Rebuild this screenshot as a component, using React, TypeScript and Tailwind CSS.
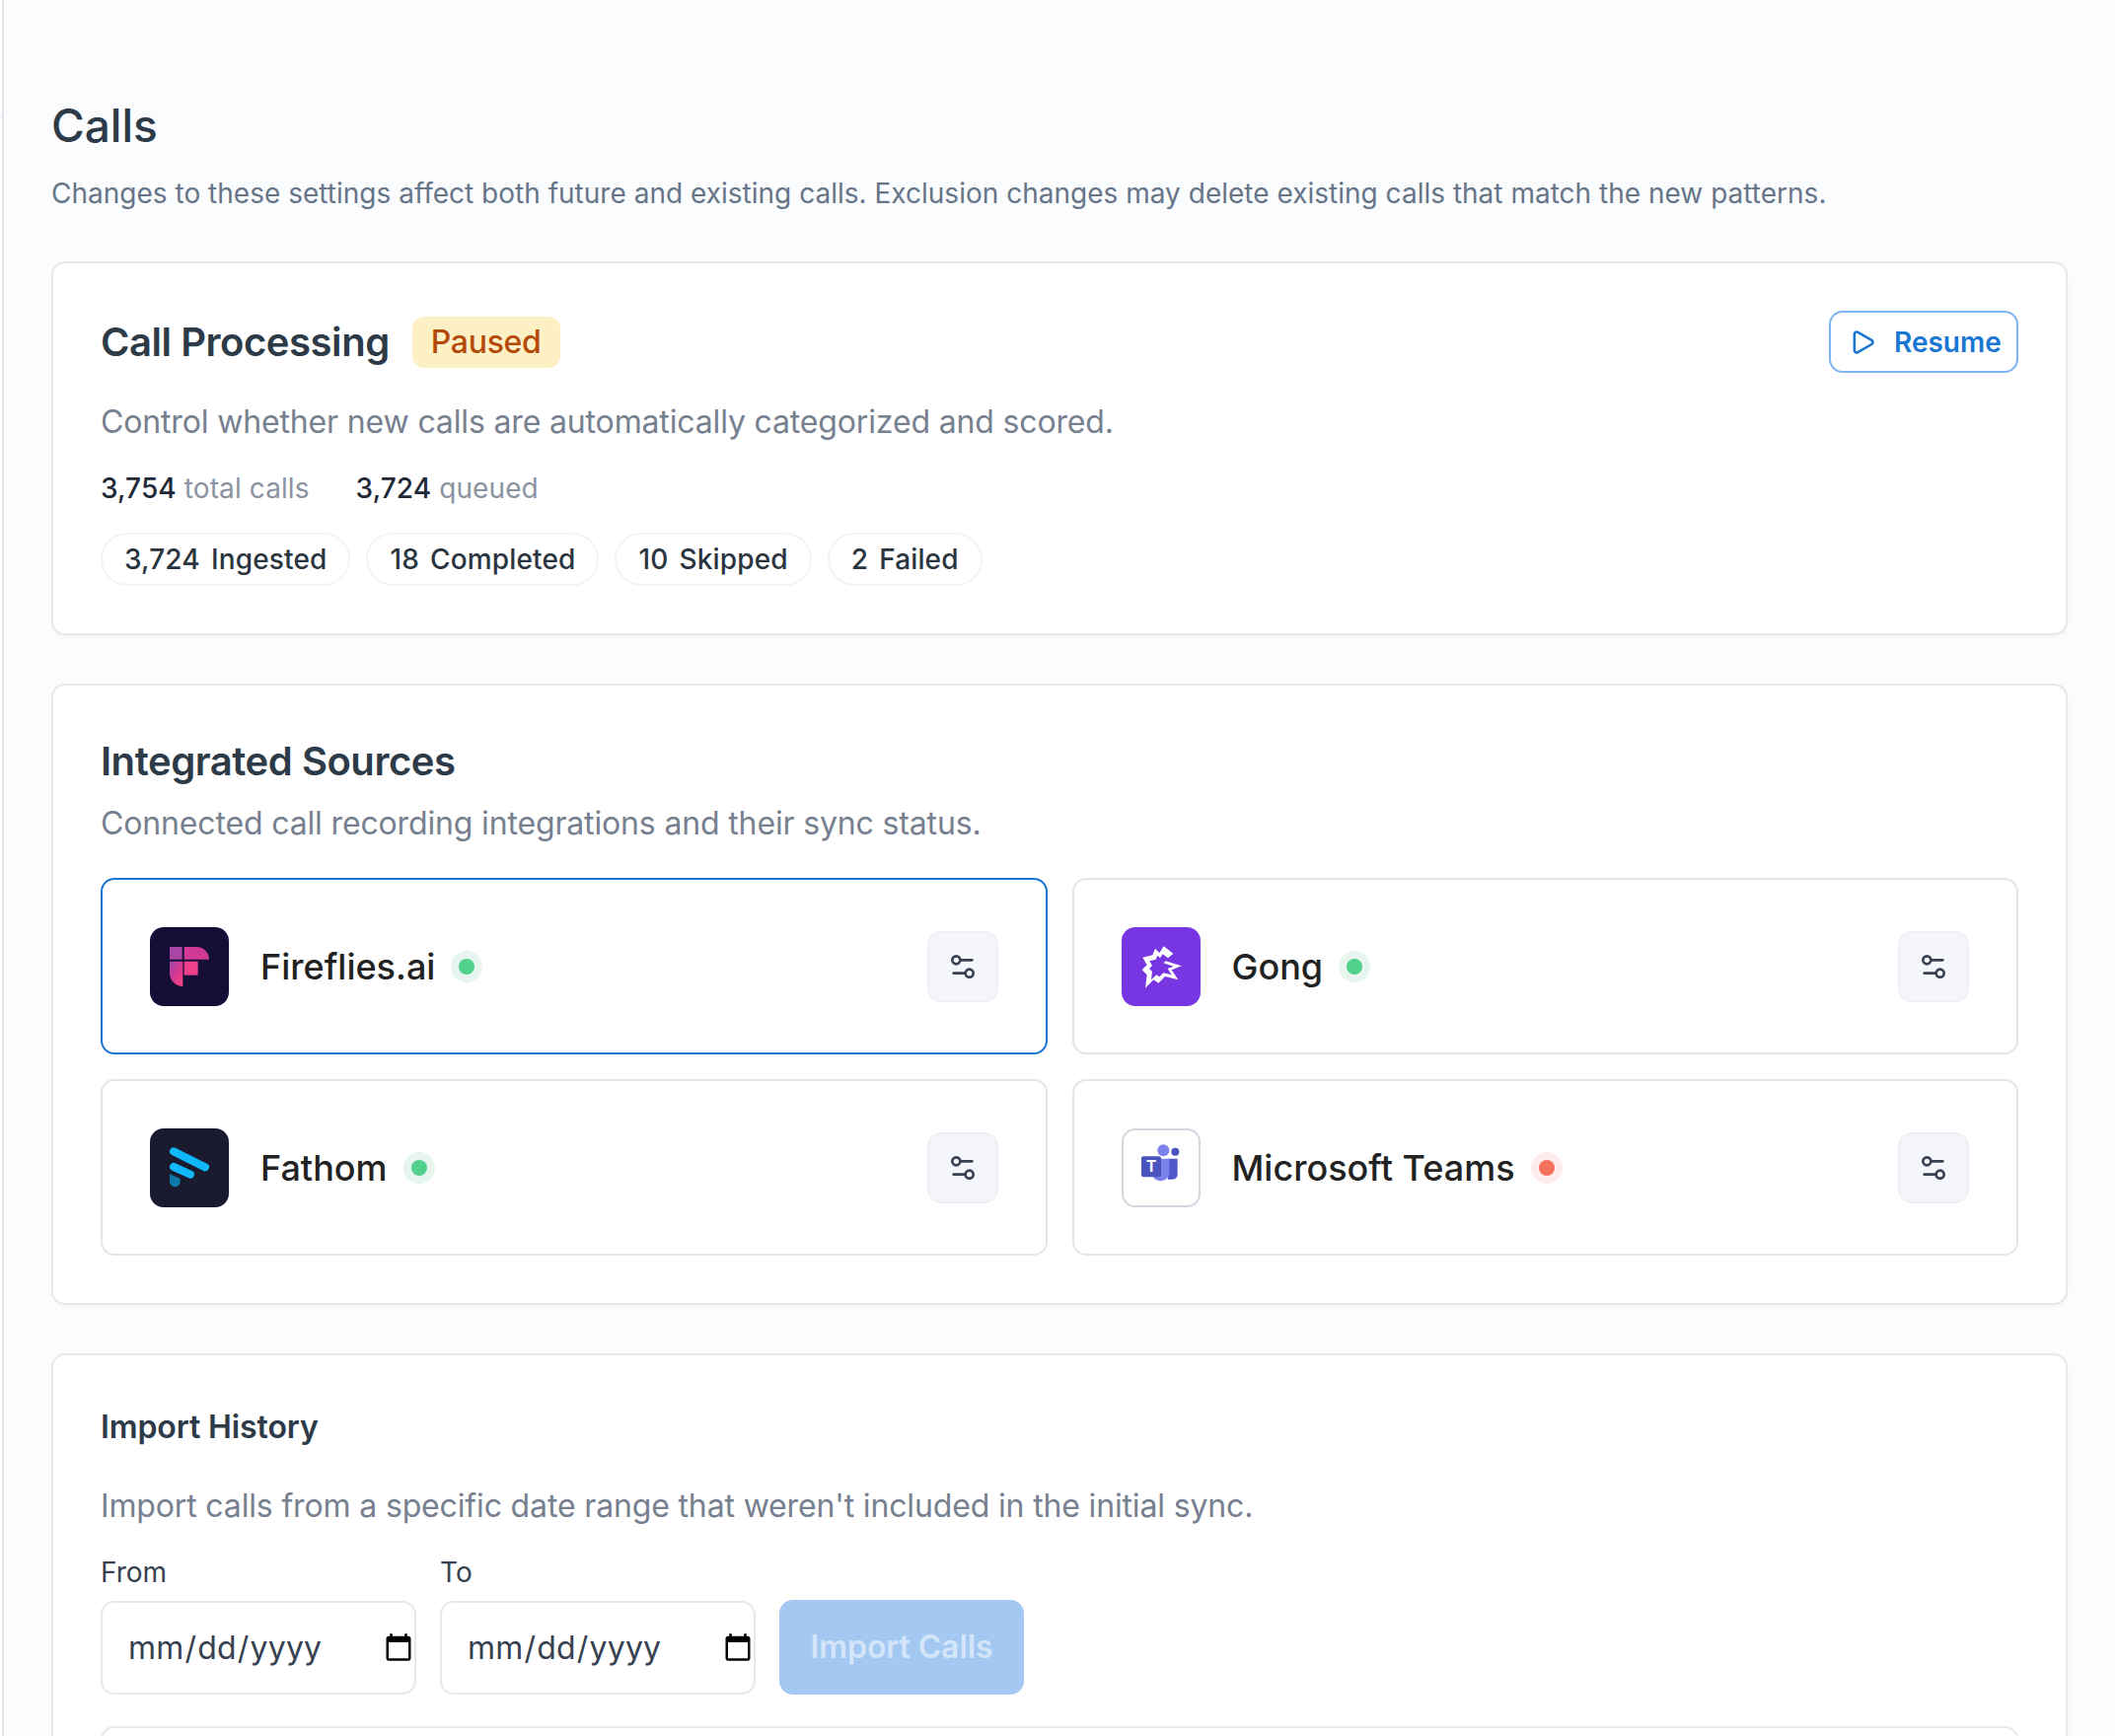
import React from "react";
import { Play, Settings2 } from "lucide-react";

const FirefliesLogo = () => (
  <svg viewBox="0 0 240 240" className="w-full h-full">
    <defs>
      <linearGradient id="ff" x1="0" y1="0" x2="1" y2="1">
        <stop offset="0" stopColor="#9a4ab0" />
        <stop offset="0.5" stopColor="#d6388f" />
        <stop offset="1" stopColor="#f8437f" />
      </linearGradient>
    </defs>
    <rect width="240" height="240" fill="#150f38" />
    <rect x="60" y="60" width="38" height="38" fill="#a947a6" />
    <path d="M104 60H142A38 38 0 0 1 180 98H104Z" fill="#d03a95" />
    <rect x="104" y="104" width="42" height="42" fill="#f0408a" />
    <path d="M60 104H100V180A40 40 0 0 1 60 140Z" fill="url(#ff)" />
  </svg>
);

const GongLogo = () => (
  <svg viewBox="0 0 240 240" className="w-full h-full">
    <rect width="240" height="240" fill="#7836e2" />
    <polygon
      points="128,58 157,80 132,102 182,118 152,130 172,160 132,150 112,170 97,160 72,185 77,145 62,130 77,115 64,92 94,85 102,65 115,78"
      fill="#ffffff"
    />
    <polygon
      points="125,82 143,95 127,109 158,119 140,126 152,145 127,139 115,151 106,145 90,160 93,135 84,126 93,117 85,103 104,98 109,86 117,94"
      fill="#7836e2"
    />
  </svg>
);

const FathomLogo = () => (
  <svg viewBox="0 0 240 240" className="w-full h-full">
    <rect width="240" height="240" fill="#1a1b2f" />
    <path d="M72 70L168 118" stroke="#10b7fb" strokeWidth="24" strokeLinecap="round" />
    <path d="M72 117L123 140" stroke="#10b7fb" strokeWidth="24" strokeLinecap="round" />
    <path d="M60 138L92 153V162A16 16 0 0 1 60 162Z" fill="#0e7aa8" />
  </svg>
);

const TeamsLogo = () => (
  <svg viewBox="6 6 228 228" className="w-full h-full">
    <rect x="6" y="6" width="228" height="228" fill="#ffffff" />
    <circle cx="163" cy="71" r="12" fill="#4b53bc" />
    <path d="M140 92H170V140A15 15 0 0 1 155 155H140Z" fill="#5059c9" />
    <circle cx="127" cy="67" r="18" fill="#7b83eb" />
    <path d="M92 92H145V138A27 27 0 0 1 92 138Z" fill="#7b83eb" />
    <rect x="60" y="85" width="60" height="63" rx="6" fill="#4b53bc" />
    <text x="90" y="133" textAnchor="middle" fill="#ffffff" fontSize="46" fontWeight="700" fontFamily="Inter, sans-serif">
      T
    </text>
  </svg>
);

const sources = [
  { name: "Fireflies.ai", logo: <FirefliesLogo />, ok: true, active: true },
  { name: "Gong", logo: <GongLogo />, ok: true },
  { name: "Fathom", logo: <FathomLogo />, ok: true },
  { name: "Microsoft Teams", logo: <TeamsLogo />, ok: false, outlined: true },
];

const counts = [
  ["3,724", "Ingested"],
  ["18", "Completed"],
  ["10", "Skipped"],
  ["2", "Failed"],
];

const cardClass = "rounded-[14px] border-2 border-[#e6e8eb] bg-white shadow-[0_2px_4px_rgba(0,0,0,0.03)]";
const dateClass =
  "h-[95px] w-[320px] rounded-[14px] border-2 border-[#e6e8eb] bg-white pl-[25px] pr-0 text-[32px] tracking-[0.2px] text-[#374151] outline-none [&::-webkit-calendar-picker-indicator]:m-0 [&::-webkit-calendar-picker-indicator]:h-[32px] [&::-webkit-calendar-picker-indicator]:w-[32px] [&::-webkit-calendar-picker-indicator]:p-0";

export default function App() {
  return (
    <div className="flex h-[1760px] overflow-hidden bg-[#fbfcfe] font-['Inter',sans-serif]">
      <aside className="w-[4px] shrink-0 border-r-2 border-[#e1e4e8] bg-white">
        <div className="h-[119px] border-b border-[#e8eaed]" />
      </aside>
      <main className="flex-1 pl-[48px] pr-[48px] pt-[98px]">
        <h1 className="text-[46px] leading-[58px] font-medium text-[#2d3a47]">Calls</h1>
        <p className="mt-[20px] text-[28px] leading-[40px] tracking-[0.01px] text-[#667588]">
          Changes to these settings affect both future and existing calls. Exclusion changes may delete existing calls that match the new patterns.
        </p>

        <section className={`mt-[49px] p-[48px] ${cardClass}`}>
          <div className="flex items-center justify-between">
            <div className="flex items-center gap-[23px]">
              <h2 className="text-[40px] leading-[56px] font-semibold tracking-[-0.45px] text-[#2d3a47]">Call Processing</h2>
              <span className="flex h-[52px] items-center rounded-[12px] bg-[#fdf0c5] px-[19px] text-[32px] font-medium tracking-[-0.3px] text-[#b54a08]">
                Paused
              </span>
            </div>
            <button className="flex h-[63px] w-[192px] items-center gap-[18px] rounded-[14px] border-2 border-[#7fb5ef] pl-[18px] text-[28px] font-semibold text-[#1976d2]">
              <Play size={28} strokeWidth={2.2} />
              Resume
            </button>
          </div>
          <p className="mt-[28px] text-[32px] leading-[44px] tracking-[-0.15px] text-[#76808f]">
            Control whether new calls are automatically categorized and scored.
          </p>
          <div className="mt-[25px] flex gap-[47px] text-[28px] leading-[40px] tracking-[0.1px] text-[#8a93a1]">
            <span>
              <span className="font-medium text-[#1f2937]">3,754</span> total calls
            </span>
            <span>
              <span className="font-medium text-[#1f2937]">3,724</span> queued
            </span>
          </div>
          <div className="mt-[25px] flex gap-[16px]">
            {counts.map(([n, label]) => (
              <div
                key={label}
                className="flex h-[54px] items-center gap-[11px] rounded-full border-2 border-[#f2f3f5] px-[22px] text-[28px] font-medium tracking-[0.15px] text-[#2b3540]"
              >
                <span>{n}</span>
                <span>{label}</span>
              </div>
            ))}
          </div>
        </section>

        <section className={`mt-[49px] p-[48px] ${cardClass}`}>
          <h2 className="mt-[1px] text-[40px] leading-[56px] font-semibold tracking-[-0.45px] text-[#2d3a47]">Integrated Sources</h2>
          <p className="mt-[13px] text-[32px] leading-[44px] tracking-[-0.15px] text-[#76808f]">
            Connected call recording integrations and their sync status.
          </p>
          <div className="mt-[33px] grid grid-cols-2 gap-x-[25px] gap-y-[25px]">
            {sources.map((s) => (
              <div
                key={s.name}
                className={`flex h-[179px] items-center justify-between rounded-[14px] border-2 bg-white px-[48px] ${
                  s.active ? "border-[#1976d2]" : "border-[#e3e5e8]"
                }`}
              >
                <div className="flex items-center">
                  <div
                    className={`h-[80px] w-[80px] overflow-hidden rounded-[14px] ${
                      s.outlined ? "border-2 border-[#d1d6de]" : ""
                    }`}
                  >
                    {s.logo}
                  </div>
                  <span className="ml-[32px] text-[36px] font-medium text-[#222222]">{s.name}</span>
                  <span
                    className={`ml-[16px] flex h-[32px] w-[32px] items-center justify-center rounded-full ${
                      s.ok ? "bg-[#e7f5ef]" : "bg-[#fdecea]"
                    }`}
                  >
                    <span className={`h-[16px] w-[16px] rounded-full ${s.ok ? "bg-[#52d18c]" : "bg-[#f8705f]"}`} />
                  </span>
                </div>
                <button className="flex h-[72px] w-[72px] items-center justify-center rounded-[14px] border-2 border-[#eef0f5] bg-[#f4f6fb] text-[#374151]">
                  <Settings2 size={32} />
                </button>
              </div>
            ))}
          </div>
        </section>

        <section className={`mt-[49px] px-[48px] pt-[49px] ${cardClass}`}>
          <h3 className="text-[32px] leading-[48px] font-semibold tracking-[-0.1px] text-[#2d3a47]">Import History</h3>
          <p className="mt-[34px] text-[32px] leading-[44px] tracking-[-0.15px] text-[#76808f]">
            Import calls from a specific date range that weren't included in the initial sync.
          </p>
          <div className="mt-[25px] flex items-end gap-[24px]">
            <label className="flex flex-col gap-[9px] text-[28px] leading-[40px] text-[#374151]">
              From
              <input type="date" className={dateClass} />
            </label>
            <label className="flex flex-col gap-[9px] text-[28px] leading-[40px] text-[#374151]">
              To
              <input type="date" className={dateClass} />
            </label>
            <button disabled className="h-[96px] w-[248px] rounded-[14px] bg-[#a3c8f2] text-[32px] font-semibold tracking-[-0.1px] text-[#d4e5f9]">
              Import Calls
            </button>
          </div>
          <div className="mt-[32px] h-[200px] rounded-[14px] border-2 border-[#e6e8eb]" />
        </section>
      </main>
    </div>
  );
}
